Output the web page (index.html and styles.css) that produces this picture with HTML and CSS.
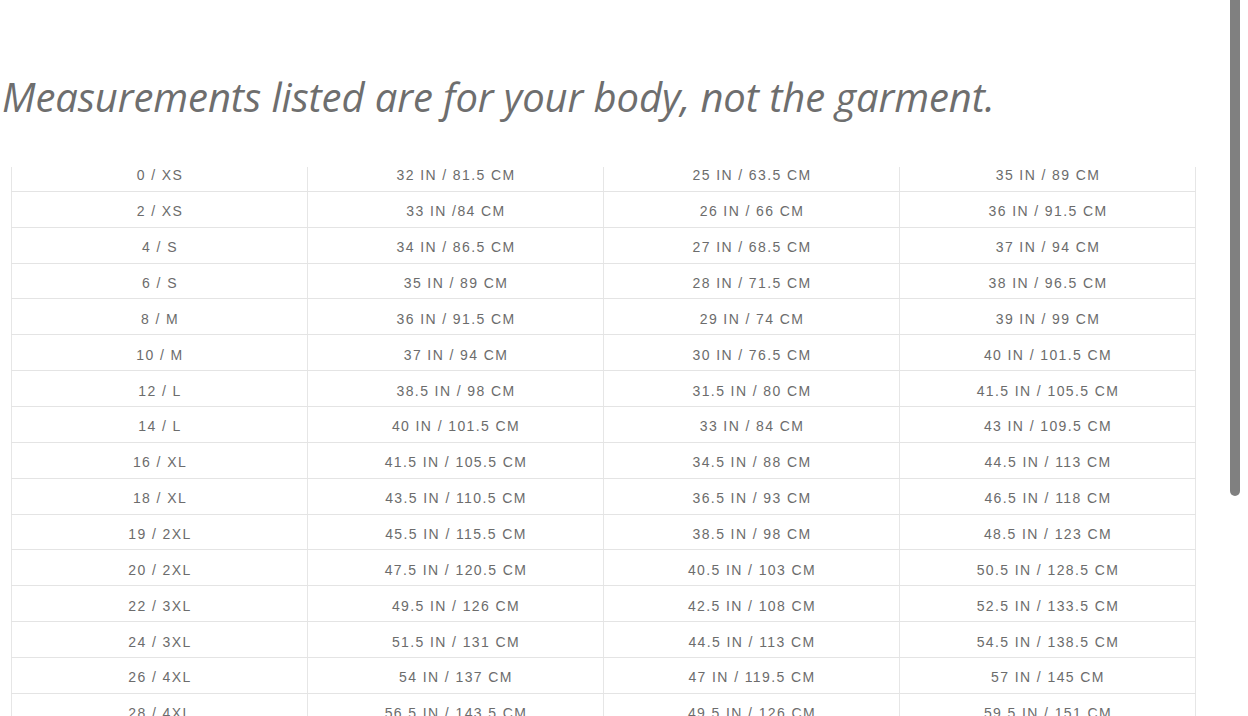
FILE: index.html
```html
<!DOCTYPE html>
<html lang="en">
<head>
<meta charset="utf-8">
<title>Size chart</title>
<link rel="stylesheet" href="styles.css">
</head>
<body>
<div class="page">
  <h1 class="note">Measurements listed are for your body, not the garment.</h1>
  <div class="chart">
    <table class="sizes">
      <tbody>
        <tr><td>0 / XS</td><td>32 IN / 81.5 CM</td><td>25 IN / 63.5 CM</td><td>35 IN / 89 CM</td></tr>
        <tr><td>2 / XS</td><td>33 IN /84 CM</td><td>26 IN / 66 CM</td><td>36 IN / 91.5 CM</td></tr>
        <tr><td>4 / S</td><td>34 IN / 86.5 CM</td><td>27 IN / 68.5 CM</td><td>37 IN / 94 CM</td></tr>
        <tr><td>6 / S</td><td>35 IN / 89 CM</td><td>28 IN / 71.5 CM</td><td>38 IN / 96.5 CM</td></tr>
        <tr><td>8 / M</td><td>36 IN / 91.5 CM</td><td>29 IN / 74 CM</td><td>39 IN / 99 CM</td></tr>
        <tr><td>10 / M</td><td>37 IN / 94 CM</td><td>30 IN / 76.5 CM</td><td>40 IN / 101.5 CM</td></tr>
        <tr><td>12 / L</td><td>38.5 IN / 98 CM</td><td>31.5 IN / 80 CM</td><td>41.5 IN / 105.5 CM</td></tr>
        <tr><td>14 / L</td><td>40 IN / 101.5 CM</td><td>33 IN / 84 CM</td><td>43 IN / 109.5 CM</td></tr>
        <tr><td>16 / XL</td><td>41.5 IN / 105.5 CM</td><td>34.5 IN / 88 CM</td><td>44.5 IN / 113 CM</td></tr>
        <tr><td>18 / XL</td><td>43.5 IN / 110.5 CM</td><td>36.5 IN / 93 CM</td><td>46.5 IN / 118 CM</td></tr>
        <tr><td>19 / 2XL</td><td>45.5 IN / 115.5 CM</td><td>38.5 IN / 98 CM</td><td>48.5 IN / 123 CM</td></tr>
        <tr><td>20 / 2XL</td><td>47.5 IN / 120.5 CM</td><td>40.5 IN / 103 CM</td><td>50.5 IN / 128.5 CM</td></tr>
        <tr><td>22 / 3XL</td><td>49.5 IN / 126 CM</td><td>42.5 IN / 108 CM</td><td>52.5 IN / 133.5 CM</td></tr>
        <tr><td>24 / 3XL</td><td>51.5 IN / 131 CM</td><td>44.5 IN / 113 CM</td><td>54.5 IN / 138.5 CM</td></tr>
        <tr><td>26 / 4XL</td><td>54 IN / 137 CM</td><td>47 IN / 119.5 CM</td><td>57 IN / 145 CM</td></tr>
        <tr><td>28 / 4XL</td><td>56.5 IN / 143.5 CM</td><td>49.5 IN / 126 CM</td><td>59.5 IN / 151 CM</td></tr>
      </tbody>
    </table>
  </div>
  <div class="scrollbar"></div>
</div>
</body>
</html>
```
FILE: styles.css
```css
html, body {
  margin: 0;
  padding: 0;
  background: #ffffff;
  height: 716px;
  overflow: hidden;
}

.page {
  position: relative;
  width: 1248px;
  height: 716px;
  overflow: hidden;
}

.note {
  margin: 73px 0 0 2px;
  font-family: "Open Sans", "Noto Sans", sans-serif;
  font-style: italic;
  font-weight: 400;
  font-size: 40px;
  line-height: 48px;
  letter-spacing: -0.1px;
  color: #6e6e6e;
  white-space: nowrap;
}

.chart {
  margin: 46px 0 0 11px;
  width: 1185px;
  overflow: hidden;
}

.sizes {
  margin-top: -11px;
  width: 1185px;
  border-collapse: collapse;
  table-layout: fixed;
  font-family: "Liberation Sans", Arial, sans-serif;
  font-size: 14px;
  letter-spacing: 1.4px;
  color: #6c6c6c;
}

.sizes td {
  height: 30.86px;
  padding: 4px 0 0 1px;
  text-align: center;
  vertical-align: middle;
  border-bottom: 1px solid #e4e4e4;
  border-left: 1px solid #e6e6e6;
  border-right: 1px solid #e6e6e6;
}

.scrollbar {
  position: absolute;
  top: -10px;
  left: 1230px;
  width: 10px;
  height: 506px;
  background: #808080;
  border-radius: 5px;
}
```
